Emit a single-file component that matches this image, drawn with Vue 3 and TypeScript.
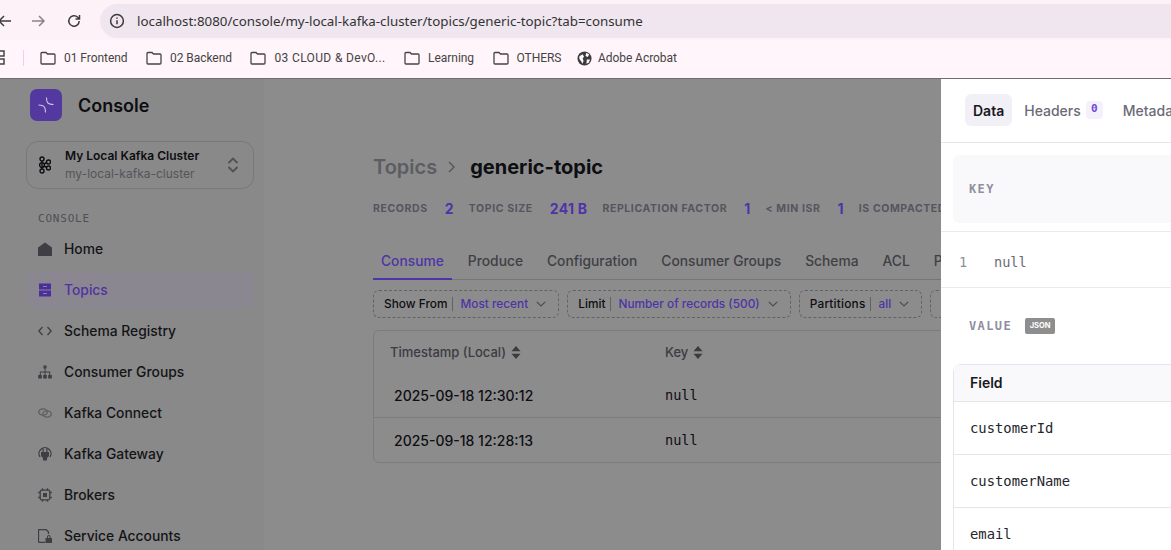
<script setup lang="ts">
interface NavItem {
  label: string
  icon: string
  active?: boolean
}

const bookmarks = ['01 Frontend', '02 Backend', '03 CLOUD & DevO...', 'Learning', 'OTHERS']

const navItems: NavItem[] = [
  { label: 'Home', icon: 'home' },
  { label: 'Topics', icon: 'topics', active: true },
  { label: 'Schema Registry', icon: 'code' },
  { label: 'Consumer Groups', icon: 'groups' },
  { label: 'Kafka Connect', icon: 'link' },
  { label: 'Kafka Gateway', icon: 'plug' },
  { label: 'Brokers', icon: 'chip' },
  { label: 'Service Accounts', icon: 'lock' },
]

const stats = [
  { label: 'Records', value: '2' },
  { label: 'Topic size', value: '241 B' },
  { label: 'Replication factor', value: '1' },
  { label: '< Min ISR', value: '1' },
  { label: 'Is compacted', value: 'No' },
]

const tabs = ['Consume', 'Produce', 'Configuration', 'Consumer Groups', 'Schema', 'ACL', 'Partitions']

const filters = [
  { label: 'Show From', value: 'Most recent' },
  { label: 'Limit', value: 'Number of records (500)' },
  { label: 'Partitions', value: 'all' },
  { label: 'Key', value: 'any' },
]

const records = ['2025-09-18 12:30:12', '2025-09-18 12:28:13']
const fields = ['customerId', 'customerName', 'email']
</script>

<template>
  <div class="window">
    <header class="toolbar">
      <svg class="back" width="16" height="16" viewBox="0 0 16 16"><path d="M14 8H2M7 3 2 8l5 5" /></svg>
      <svg class="forward" width="16" height="16" viewBox="0 0 16 16"><path d="M2 8h12M9 3l5 5-5 5" /></svg>
      <svg class="reload" width="16" height="16" viewBox="0 0 16 16"><path d="M13.2 8a5.2 5.2 0 1 1-1.5-3.7L13.5 6M13.5 2v4h-4" /></svg>
      <div class="address">
        <svg width="16" height="16" viewBox="0 0 16 16"><circle cx="8" cy="8" r="6.4" /><path d="M8 7.2v4M8 4.4v1.4" /></svg>
        <span>localhost:8080/console/my-local-kafka-cluster/topics/generic-topic?tab=consume</span>
      </div>
    </header>

    <nav class="bookmarks">
      <svg class="apps" width="8" height="16" viewBox="0 0 8 16"><path d="M1 1h5v5H1zM1 9h5v5H1z" /></svg>
      <i class="divider" />
      <a v-for="b in bookmarks" :key="b" class="bookmark" :class="{ wide: b.includes('CLOUD') }">
        <svg width="16" height="14" viewBox="0 0 16 14"><path d="M1 2.5a1 1 0 0 1 1-1h4l1.500 1.500H14a1 1 0 0 1 1 1V12a1 1 0 0 1-1 1H2a1 1 0 0 1-1-1z" /></svg>
        {{ b }}
      </a>
      <a class="bookmark acrobat">
        <svg width="15" height="15" viewBox="0 0 16 16">
          <circle cx="8" cy="8" r="7.500" />
          <path d="M2.500 5.500 6 3.500l1.500 2.500L6 8l1 2.500-1 3-2-3-1.500-2zM10 1.800l3 2-1.500 2.500-2.500-1zM10.500 9h3.500l-1.500 3.500-2.500 1z" />
        </svg>
        Adobe Acrobat
      </a>
    </nav>

    <div class="app">
      <aside class="sidebar">
        <div class="brand">
          <span class="logo">
            <svg width="20" height="20" viewBox="0 0 20 20"><path d="M10.500 2.500C10.500 7.500 11.500 9.300 17.500 9.500M2.500 10C8.500 10.200 9.500 12 9.500 17.500" /></svg>
          </span>
          <strong>Console</strong>
        </div>

        <div class="cluster">
          <svg width="12" height="18" viewBox="0 0 12 18" class="kafka">
            <circle cx="3" cy="3" r="2" /><circle cx="3" cy="9" r="2.400" /><circle cx="3" cy="15" r="2" /><circle cx="9.500" cy="6" r="2" /><circle cx="9.500" cy="12" r="2" />
            <path d="M3 5v8M5 8l3-1.500M5 10l3 1.500" />
          </svg>
          <div class="cluster-text">
            <b>My Local Kafka Cluster</b>
            <span>my-local-kafka-cluster</span>
          </div>
          <svg width="12" height="16" viewBox="0 0 12 16" class="updown"><path d="M1.500 6 6 1.500 10.500 6M1.500 10 6 14.500 10.500 10" /></svg>
        </div>

        <div class="section">CONSOLE</div>
        <ul class="nav">
          <li v-for="item in navItems" :key="item.label" :class="{ active: item.active }">
            <svg width="14" height="14" viewBox="0 0 14 14" class="nav-icon" :class="item.icon">
              <path v-if="item.icon === 'home'" class="solid" d="M7 .5 14 5.500V14H0V5.500z" />
              <path v-else-if="item.icon === 'topics'" class="solid" fill-rule="evenodd" d="M1 .5h12v6H1zM1 7.500h12v6H1zM5 3h4v1H5zM5 10h4v1H5z" />
              <path v-else-if="item.icon === 'code'" d="M4.500 3 .8 7l3.700 4M9.500 3l3.700 4-3.700 4" />
              <path v-else-if="item.icon === 'groups'" class="tree" d="M5.500.5h3v3h-3zM.2 10h3.600v3.500H.2zM5.200 10h3.600v3.500H5.200zM10.200 10h3.600v3.500h-3.600zM6.500 3.500h1v3h4.700v3.500h-1V7.500h-3.700V10h-1V7.500H2.800V10h-1V6.500h4.700z" />
              <g v-else-if="item.icon === 'link'" class="faint"><ellipse cx="5" cy="6" rx="4.300" ry="3.100" /><ellipse cx="9" cy="8" rx="4.300" ry="3.100" /></g>
              <g v-else-if="item.icon === 'plug'">
                <path d="M2 10A6 6 0 1 1 12 10" />
                <path class="solid" d="M4.500 1.500h1.200V5h2.600V1.500h1.200V5H11v4l-2 2v2.500H5V11L3 9V5h1.500z" />
              </g>
              <g v-else-if="item.icon === 'chip'">
                <rect x="2.200" y="2.200" width="9.600" height="9.600" rx="1.500" />
                <rect class="solid" x="5" y="5" width="4" height="4" />
                <path d="M4.500.2v2M9.500.2v2M4.500 11.800v2M9.500 11.800v2M.2 4.500h2M.2 9.500h2M11.800 4.500h2M11.800 9.500h2" />
              </g>
              <g v-else>
                <path d="M7 13.300H1.500a1 1 0 0 1-1-1V1.500a1 1 0 0 1 1-1H8l2.500 2.500v2" />
                <path class="solid" d="M7.500 9h6.500v5H7.500zM9 9V7.800a1.800 1.800 0 0 1 3.600 0V9h-1V7.800a.8.8 0 0 0-1.600 0V9z" />
              </g>
            </svg>
            <span>{{ item.label }}</span>
          </li>
        </ul>
      </aside>

      <main class="content">
        <h1><span class="crumb">Topics</span><svg width="12" height="14" viewBox="0 0 12 14"><path d="M3 2l5 5-5 5" /></svg><span class="name">generic-topic</span></h1>

        <dl class="stats">
          <template v-for="s in stats" :key="s.label">
            <dt>{{ s.label }}</dt>
            <dd>{{ s.value }}</dd>
          </template>
        </dl>

        <div class="tabs">
          <span v-for="(t, i) in tabs" :key="t" class="tab" :class="{ current: i === 0 }">{{ t }}</span>
        </div>

        <div class="filters">
          <div v-for="f in filters" :key="f.label" class="filter">
            <span class="f-label">{{ f.label }}</span>
            <span class="f-value">{{ f.value }}</span>
            <svg width="10" height="6" viewBox="0 0 10 6"><path d="M.8.8 5 5 9.200.8" /></svg>
          </div>
        </div>

        <div class="records">
          <div class="row head">
            <span class="ts">Timestamp (Local)<svg width="10" height="13" viewBox="0 0 10 13"><path d="M5 0l4.500 5.300h-9zM5 13 .5 7.700h9z" /></svg></span>
            <span>Key<svg width="10" height="13" viewBox="0 0 10 13"><path d="M5 0l4.500 5.300h-9zM5 13 .5 7.700h9z" /></svg></span>
          </div>
          <div v-for="r in records" :key="r" class="row body">
            <span class="ts">{{ r }}</span>
            <code>null</code>
          </div>
        </div>
      </main>

      <section class="drawer">
        <div class="drawer-tabs">
          <span class="d-tab on">Data</span>
          <span class="d-tab">Headers<em>0</em></span>
          <span class="d-tab">Metadata</span>
        </div>

        <div class="key-wrap"><div class="key-box">KEY</div></div>
        <div class="key-line"><span>1</span><code>null</code></div>

        <div class="value-head"><b>VALUE</b><i>JSON</i></div>

        <div class="field-table">
          <div class="field-head">Field</div>
          <div v-for="f in fields" :key="f" class="field-row">{{ f }}</div>
        </div>
      </section>
    </div>
  </div>
</template>

<style scoped>
.window {
  width: 1171px;
  height: 550px;
  overflow: hidden;
  display: flex;
  flex-direction: column;
  font-family: Inter, "Noto Sans", sans-serif;
  background: #fff;
}

svg path,
svg circle,
svg ellipse,
svg rect {
  fill: none;
}

/* browser chrome */
.toolbar {
  height: 40px;
  flex: none;
  box-sizing: border-box;
  padding: 4px 0 2px 0;
  display: flex;
  align-items: center;
  background: #fcf2f8;
}

.toolbar svg path,
.toolbar svg circle {
  stroke: #3c3a3c;
  stroke-width: 1.500;
}

.back {
  margin-left: -3px;
}

.forward {
  margin-left: 17px;
}

.forward path {
  stroke: #8a8488 !important;
}

.reload {
  margin-left: 20px;
}

.address {
  flex: 1;
  height: 34px;
  margin-left: 18px;
  padding-left: 9px;
  border-radius: 17px 0 0 17px;
  background: #f0e6ef;
  display: flex;
  align-items: center;
  gap: 12px;
  font: 13.340px "Noto Sans", sans-serif;
  color: #333;
}

.bookmarks {
  height: 39px;
  flex: none;
  box-sizing: border-box;
  padding-bottom: 2px;
  border-bottom: 1px solid #6f6f6f;
  background: #fff5fa;
  display: flex;
  align-items: center;
  font: 12px Roboto, sans-serif;
  letter-spacing: -0.050px;
  color: #444;
}

.apps {
  margin-left: -2px;
}

.apps path {
  stroke: #444;
  stroke-width: 1.500;
}

.divider {
  width: 1px;
  height: 16px;
  margin: 0 8px 0 17px;
  background: #f3cfe6;
}

.bookmark {
  display: flex;
  align-items: center;
  gap: 8px;
  margin-left: 8px;
  margin-right: 10.500px;
  white-space: nowrap;
}

.bookmark.wide {
  letter-spacing: 0.350px;
}

.bookmark path {
  stroke: #444;
  stroke-width: 1.300;
}

.acrobat {
  gap: 6px;
  margin-left: 5px;
}

.acrobat svg path {
  stroke: none;
  fill: #fff5fa;
}

.acrobat svg circle {
  stroke: none;
  fill: #3b3b3b;
}

/* app shell: colours already include the dimming of the open drawer */
.app {
  flex: 1;
  min-height: 0;
  position: relative;
  display: flex;
  overflow: hidden;
  background: #8c8c8c;
}

.sidebar {
  width: 264px;
  flex: none;
  box-sizing: border-box;
  padding: 10px 10px 0 26px;
  background: #898989;
}

.brand {
  display: flex;
  align-items: center;
  gap: 16px;
  margin-left: 4px;
  height: 32px;
  font-size: 18px;
  color: #0e0e12;
}

.brand strong {
  font-weight: 600;
}

.logo {
  width: 32px;
  height: 32px;
  border-radius: 7px;
  background: #53389f;
  display: flex;
  align-items: center;
  justify-content: center;
}

.logo path {
  stroke: #cfc6e0;
  stroke-width: 1.100;
}

.cluster {
  margin-top: 20px;
  width: 228px;
  height: 48px;
  box-sizing: border-box;
  border: 1px solid #787879;
  border-radius: 12px;
  padding: 0 14px 0 12px;
  display: flex;
  align-items: center;
}

.kafka circle,
.kafka path {
  stroke: #0e0e12;
  stroke-width: 1.400;
}

.cluster-text {
  flex: 1;
  margin-left: 14px;
  display: flex;
  flex-direction: column;
  gap: 2px;
  font-size: 12px;
  line-height: 16px;
}

.cluster-text b {
  font-weight: 600;
  color: #0e0e12;
}

.cluster-text span {
  color: #55555b;
}

.updown path {
  stroke: #505056;
  stroke-width: 1.800;
}

.section {
  margin: 23px 0 0 12px;
  font: 11px/14px "DejaVu Sans Mono", monospace;
  letter-spacing: 0.800px;
  color: #4f4f56;
}

.nav {
  list-style: none;
  margin: 4px 0 0;
  padding: 0;
  display: flex;
  flex-direction: column;
  gap: 3px;
  width: 228px;
}

.nav li {
  height: 38px;
  flex: none;
  display: flex;
  align-items: center;
  gap: 12px;
  padding-left: 12px;
  border-radius: 8px;
  font-size: 13.850px;
  font-weight: 500;
  color: #141418;
}

.nav li.active {
  background: #8a8791;
  color: #4f33a0;
}

.nav-icon path,
.nav-icon ellipse,
.nav-icon rect {
  stroke: #3e3e44;
  stroke-width: 1.300;
}

.nav-icon .solid,
.nav-icon .tree {
  fill: #3e3e44;
  stroke: none;
}

.active .nav-icon .solid {
  fill: #4a2f9c;
}

.nav-icon .faint ellipse {
  stroke: #5e5e64;
}

.content {
  flex: 1;
  min-width: 0;
  margin-right: 230px;
  overflow: hidden;
  padding: 74px 0 0 109px;
  white-space: nowrap;
}

h1 {
  margin: 0;
  display: flex;
  align-items: center;
  height: 28px;
  font-size: 20px;
  font-weight: 600;
  color: #0e0e12;
}

.name {
  font-weight: 700;
}

.crumb {
  color: #5c5c63;
}

h1 svg {
  margin: 0 12px 0 9px;
}

h1 svg path {
  stroke: #55555b;
  stroke-width: 1.400;
}

.stats {
  margin: 19px 0 0;
  height: 16px;
  display: flex;
  align-items: center;
}

.stats dt {
  font: 700 10.500px Inter, sans-serif;
  letter-spacing: 0.600px;
  text-transform: uppercase;
  color: #55555f;
}

.stats dd {
  margin: 0 15px 0 17px;
  font-size: 14px;
  font-weight: 700;
  letter-spacing: 0.300px;
  color: #4f33a8;
}

.tabs {
  margin-top: 28px;
  height: 36px;
  width: 640px;
  display: flex;
  border-bottom: 1px solid #757578;
  box-sizing: border-box;
}

.tab {
  padding: 0 8px;
  margin-right: 8px;
  line-height: 34px;
  font-size: 13.800px;
  font-weight: 500;
  color: #3f3f46;
  height: 36px;
  box-sizing: border-box;
}

.tab.current {
  color: #4f33a8;
  border-bottom: 2px solid #4f33a8;
}

.filters {
  margin-top: 10px;
  display: flex;
  gap: 8px;
}

.filter {
  height: 28px;
  flex: none;
  box-sizing: border-box;
  border: 1px dashed #636366;
  border-radius: 6px;
  padding: 0 12px 0 10px;
  display: flex;
  align-items: center;
  font-size: 11.850px;
  font-weight: 500;
}

.filter:nth-child(3) .f-label {
  letter-spacing: 0.200px;
}

.f-label {
  color: #0e0e12;
  padding-right: 5px;
  margin-right: 7px;
  border-right: 1px solid #636366;
  line-height: 14px;
}

.f-value {
  color: #4f33a8;
  margin-right: 8px;
}

.filter path {
  stroke: #4c4c52;
  stroke-width: 1.200;
}

.records {
  margin-top: 12px;
  width: 900px;
  border: 1px solid #7c7c7f;
  border-radius: 6px;
  box-sizing: border-box;
}

.row {
  display: grid;
  grid-template-columns: 275px 1fr;
  align-items: center;
  padding-left: 16px;
}

.head {
  height: 42px;
  font-size: 13px;
  font-weight: 500;
  color: #3b3b42;
}

.head span {
  display: flex;
  align-items: center;
  gap: 5px;
}

.head path {
  fill: #3b3b42;
}

.body {
  height: 44px;
  font-size: 14px;
  font-weight: 500;
  color: #0e0e12;
}

.body + .body {
  border-top: 1px solid #7c7c7f;
}

.body .ts {
  padding-left: 4px;
}

code {
  font: 400 13.600px "DejaVu Sans Mono", monospace;
}

/* drawer sits on top of the dimmed page */
.drawer {
  position: absolute;
  left: 941px;
  top: 0;
  bottom: 0;
  width: 500px;
  background: #fff;
  white-space: nowrap;
}

.drawer-tabs {
  height: 64px;
  box-sizing: border-box;
  padding: 15px 0 0 24px;
  display: flex;
  gap: 4px;
  border-bottom: 1px solid #e5e5ec;
}

.d-tab {
  height: 32px;
  padding: 0 8px;
  display: flex;
  align-items: center;
  gap: 5px;
  font-size: 14px;
  font-weight: 500;
  color: #6b6b78;
  border-radius: 6px;
}

.d-tab.on {
  background: #f2f0f7;
  color: #18181d;
  font-weight: 600;
}

.d-tab em {
  width: 17px;
  height: 18px;
  border-radius: 4px;
  background: #f4f1fc;
  color: #7347d6;
  font: 700 11px/16px "DejaVu Sans Mono", monospace;
  text-align: center;
}

.key-wrap {
  padding: 12px 0 8px 12px;
  border-bottom: 1px solid #e9e9ee;
}

.key-box {
  height: 68px;
  display: flex;
  align-items: center;
  padding-left: 16px;
  border-radius: 6px;
  background: #f9f9fb;
  font: 700 12px "DejaVu Sans Mono", monospace;
  letter-spacing: 1.400px;
  color: #8f8f9e;
}

.key-line {
  height: 56px;
  box-sizing: border-box;
  padding: 5px 0 0 18px;
  display: flex;
  align-items: center;
  border-bottom: 1px solid #e9e9ee;
  color: #6c6c72;
}

.key-line span {
  width: 35px;
  font: 13.600px "DejaVu Sans Mono", monospace;
  color: #8f8f9e;
}

.value-head {
  padding: 30px 0 0 28px;
  display: flex;
  align-items: center;
  gap: 13px;
  height: 16px;
}

.value-head b {
  font: 700 12px "DejaVu Sans Mono", monospace;
  letter-spacing: 1.400px;
  color: #8f8f9e;
}

.value-head i {
  width: 30px;
  height: 16px;
  border-radius: 2px;
  background: #8e8e8e;
  color: #fff;
  font: 700 7.500px/15px Inter, sans-serif;
  text-align: center;
}

.field-table {
  margin: 30px 0 0 12px;
  border: 1px solid #e5e5ec;
  border-radius: 8px 0 0 0;
}

.field-head {
  height: 36px;
  line-height: 36px;
  padding-left: 16px;
  background: #f9f9fb;
  font-size: 14px;
  font-weight: 600;
  color: #18181d;
}

.field-row {
  height: 53px;
  box-sizing: border-box;
  padding-left: 16px;
  border-top: 1px solid #e5e5ec;
  font: 13.850px/52px "DejaVu Sans Mono", monospace;
  color: #25252c;
}
</style>

<style>
html,
body {
  overflow: hidden;
}
</style>
